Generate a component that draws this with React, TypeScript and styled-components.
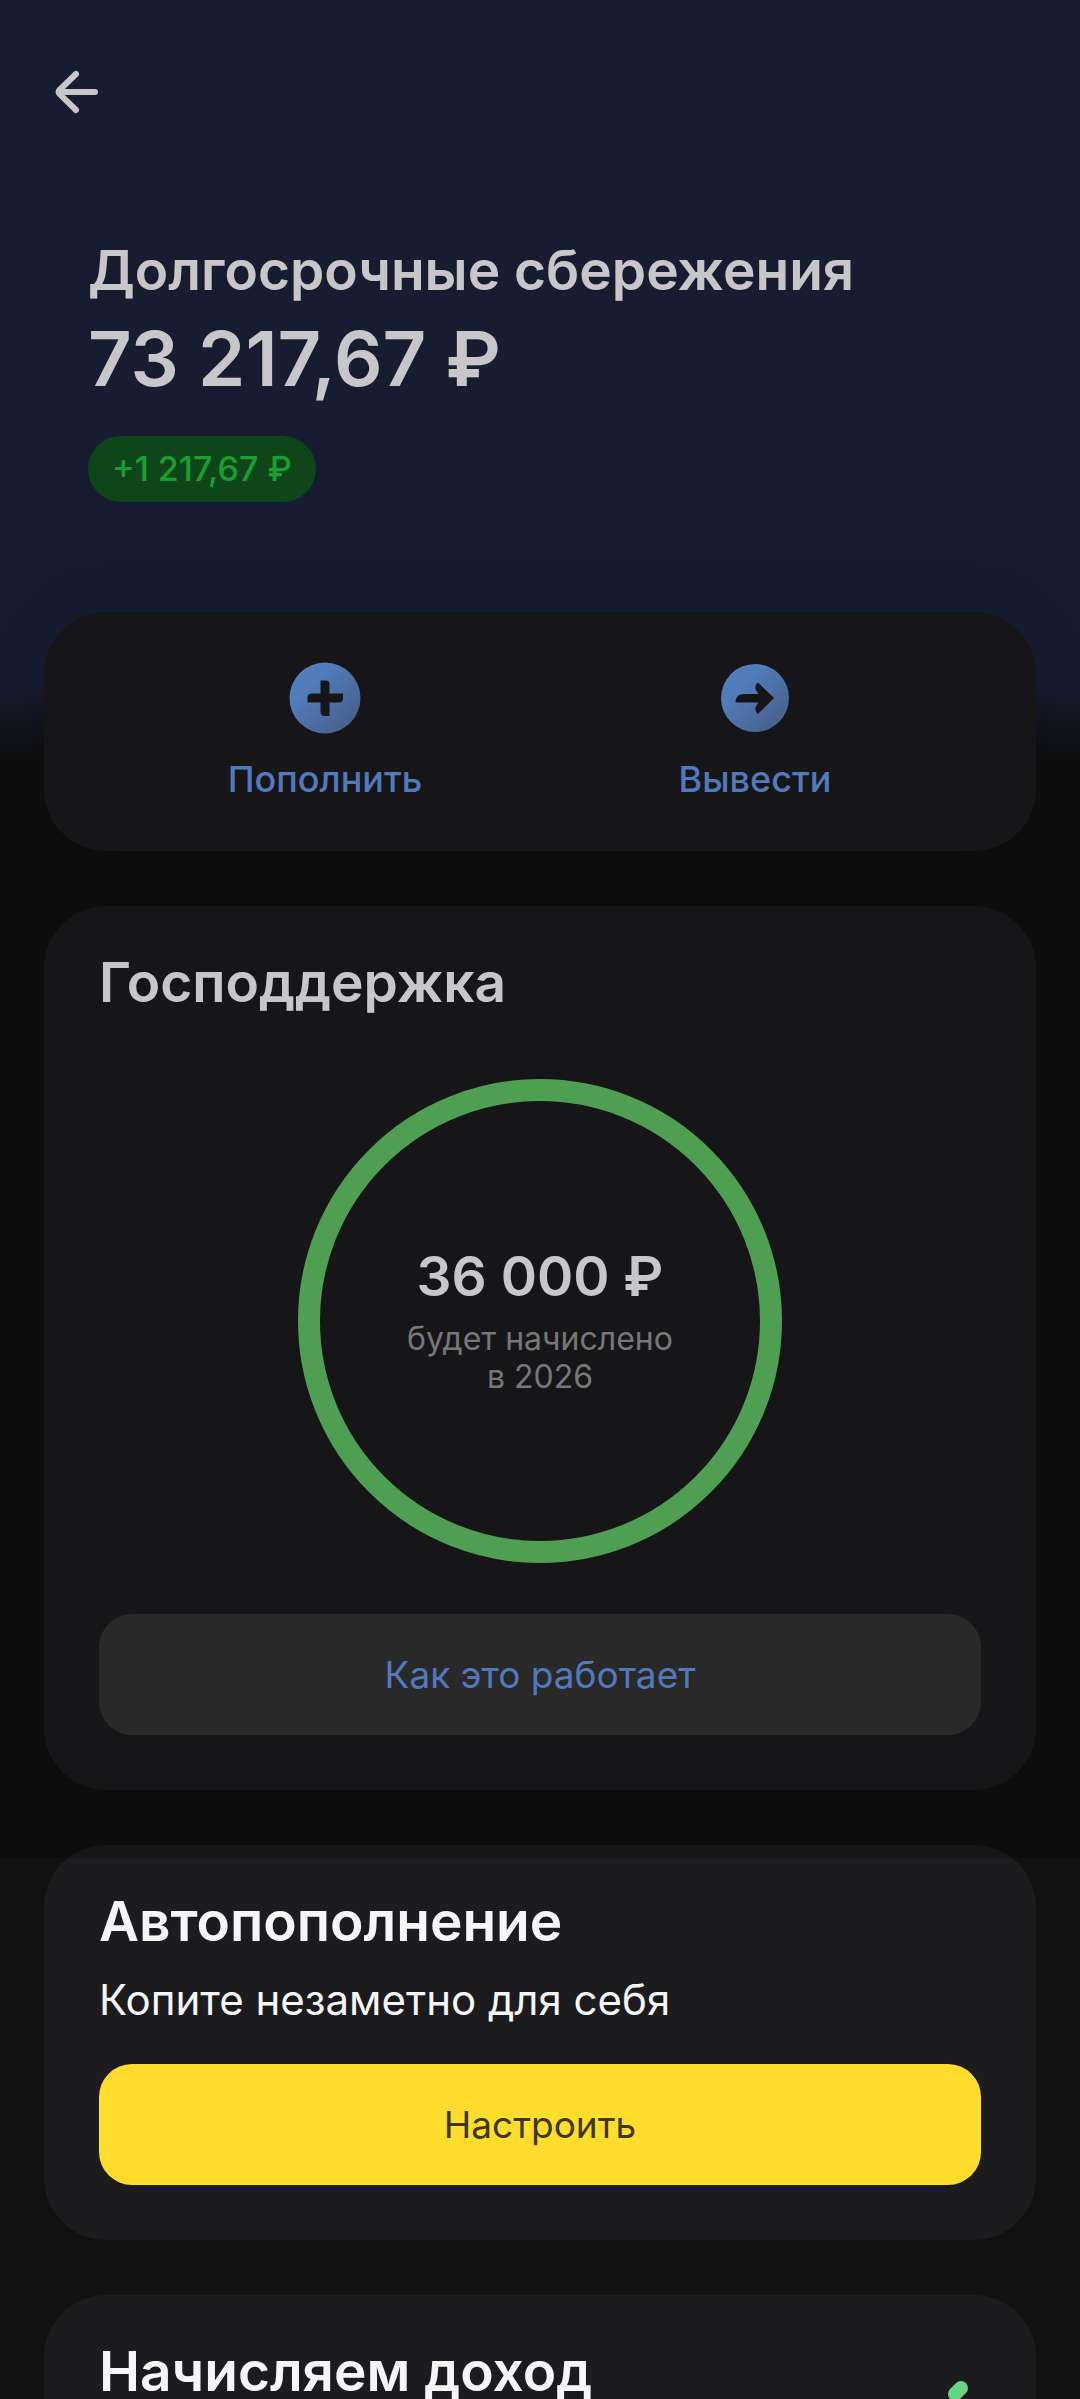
import React from "react";
import styled, { createGlobalStyle } from "styled-components";

const GlobalStyle = createGlobalStyle`
  *, *::before, *::after { box-sizing: border-box; }
  body {
    margin: 0;
    background: #111111;
    color: #f6f6f8;
    font-family: Inter, "Noto Sans", sans-serif;
    overflow-x: hidden;
  }
  h1, h2, p { margin: 0; }
  button { border: 0; padding: 0; background: none; font: inherit; cursor: pointer; }
`;

const Screen = styled.main`
  display: flex;
  flex-direction: column;
  gap: 55px;
  max-height: 100vh;
  overflow: hidden;
`;

const Dimmed = styled.div`
  position: relative;
  display: flex;
  flex-direction: column;
  gap: 55px;
  background: linear-gradient(#1e233c 0, #1e233c 685px, #111111 765px);

  &::after {
    content: "";
    position: absolute;
    inset: 0 0 -68px;
    background: rgba(0, 0, 0, 0.19);
    pointer-events: none;
  }
`;

const Header = styled.header`
  display: flex;
  flex-direction: column;
  align-items: flex-start;
  padding: 56px 44px 55px;
`;

const BackButton = styled.button`
  display: flex;
  width: 72px;
  height: 72px;
  align-items: center;
  color: #f6f6f8;
`;

const Summary = styled.div`
  display: flex;
  flex-direction: column;
  align-items: flex-start;
  padding: 106px 44px 0;
`;

const Title = styled.h1`
  font-size: 55px;
  font-weight: 600;
  line-height: 72px;
`;

const Amount = styled.p`
  font-size: 76px;
  font-weight: 600;
  line-height: 104px;
`;

const Profit = styled.span`
  margin-top: 26px;
  padding: 0 24px;
  border-radius: 33px;
  background: #125720;
  color: #1ec43e;
  font-size: 34px;
  font-weight: 500;
  line-height: 66px;
`;

const Card = styled.section`
  display: flex;
  flex-direction: column;
  margin: 0 44px;
  padding: 42px 55px 55px;
  border-radius: 62px;
  background: #1c1c1e;
`;

const ActionsCard = styled(Card)`
  flex-direction: row;
  padding: 50px 66px 46px;
  box-shadow: 0 0 60px rgba(0, 0, 0, 0.14);
`;

const Action = styled.button`
  flex: 1;
  display: flex;
  flex-direction: column;
  align-items: center;
  gap: 19px;
  color: #6596e6;
  font-size: 36px;
  font-weight: 500;
  line-height: 52px;
`;

const CardTitle = styled.h2`
  font-size: 55px;
  font-weight: 600;
  line-height: 68px;
`;

const Ring = styled.div`
  align-self: center;
  display: flex;
  flex-direction: column;
  align-items: center;
  justify-content: center;
  width: 484px;
  height: 484px;
  margin: 63px 0 51px;
  padding-bottom: 6px;
  border: 22px solid #62c466;
  border-radius: 50%;
`;

const RingAmount = styled.strong`
  font-size: 55px;
  font-weight: 600;
  line-height: 72px;
`;

const RingNote = styled.p`
  margin-top: 8px;
  color: #929397;
  font-size: 32px;
  line-height: 38px;
  text-align: center;
`;

const WideButton = styled.button<{ $primary?: boolean }>`
  height: 121px;
  border-radius: 33px;
  background: ${(p) => (p.$primary ? "#ffdd2d" : "#333333")};
  color: ${(p) => (p.$primary ? "#40371a" : "#6596e6")};
  font-size: 37px;
`;

const Subtitle = styled.p`
  margin: 17px 0 36px;
  font-size: 42px;
  line-height: 56px;
`;

const CardHead = styled.div`
  display: flex;
  justify-content: space-between;
`;

const BackIcon = () => (
  <svg width="66" height="66" viewBox="0 0 66 66" fill="none" stroke="currentColor" strokeWidth="6" strokeLinecap="round" strokeLinejoin="round" aria-hidden="true">
    <path d="M51 33H15M32 15 15.500 31Q13.500 33 15.500 35L32 51" />
  </svg>
);

const PlusIcon = () => (
  <svg width="72" height="72" viewBox="0 0 72 72" aria-hidden="true">
    <defs>
      <linearGradient id="plusFill" x1="0" y1="0" x2="1" y2="1">
        <stop offset="0.3" stopColor="#659ae8" />
        <stop offset="1" stopColor="#56709f" />
      </linearGradient>
    </defs>
    <circle cx="36" cy="36" r="35.500" fill="url(#plusFill)" />
    <path d="M31.500 18.500H37Q40.500 18.500 40.500 22V31.500H54V36Q54 40.500 49.500 40.500H40.500V54H36Q31.500 54 31.500 49.500V40.500H18.500V36Q18.500 31.500 23 31.500H31.500Z" fill="#1c1c1e" />
  </svg>
);

const ArrowIcon = () => (
  <svg width="72" height="72" viewBox="0 0 72 72" aria-hidden="true">
    <defs>
      <linearGradient id="arrowFill" x1="0" y1="0" x2="1" y2="1">
        <stop offset="0.3" stopColor="#659ae8" />
        <stop offset="1" stopColor="#56709f" />
      </linearGradient>
    </defs>
    <circle cx="36" cy="36" r="34" fill="url(#arrowFill)" />
    <path d="M16.500 40.500Q16.500 32 25 32H39.500L37.500 29Q34.500 24 39 20.500L55 36 39 52Q34.500 48 37.500 43.500L39.500 40.500Z" fill="#1c1c1e" />
  </svg>
);

const IncomeIcon = () => (
  <svg width="64" height="64" viewBox="0 0 64 64" fill="none" stroke="#66d581" strokeWidth="14" strokeLinecap="round" aria-hidden="true">
    <path d="M44 51 38 57" />
  </svg>
);

export default function App() {
  return (
    <>
      <GlobalStyle />
      <Screen>
        <Dimmed>
          <Header>
            <BackButton type="button" aria-label="Назад">
              <BackIcon />
            </BackButton>
            <Summary>
              <Title>Долгосрочные сбережения</Title>
              <Amount>73 217,67 ₽</Amount>
              <Profit>+1 217,67 ₽</Profit>
            </Summary>
          </Header>
          <ActionsCard aria-label="Действия">
            <Action type="button">
              <PlusIcon />
              Пополнить
            </Action>
            <Action type="button">
              <ArrowIcon />
              Вывести
            </Action>
          </ActionsCard>
          <Card>
            <CardTitle>Господдержка</CardTitle>
            <Ring>
              <RingAmount>36 000 ₽</RingAmount>
              <RingNote>
                будет начислено
                <br />в 2026
              </RingNote>
            </Ring>
            <WideButton type="button">Как это работает</WideButton>
          </Card>
        </Dimmed>
        <Card>
          <CardTitle>Автопополнение</CardTitle>
          <Subtitle>Копите незаметно для себя</Subtitle>
          <WideButton type="button" $primary>
            Настроить
          </WideButton>
        </Card>
        <Card>
          <CardHead>
            <CardTitle>Начисляем доход</CardTitle>
            <IncomeIcon />
          </CardHead>
        </Card>
      </Screen>
    </>
  );
}
